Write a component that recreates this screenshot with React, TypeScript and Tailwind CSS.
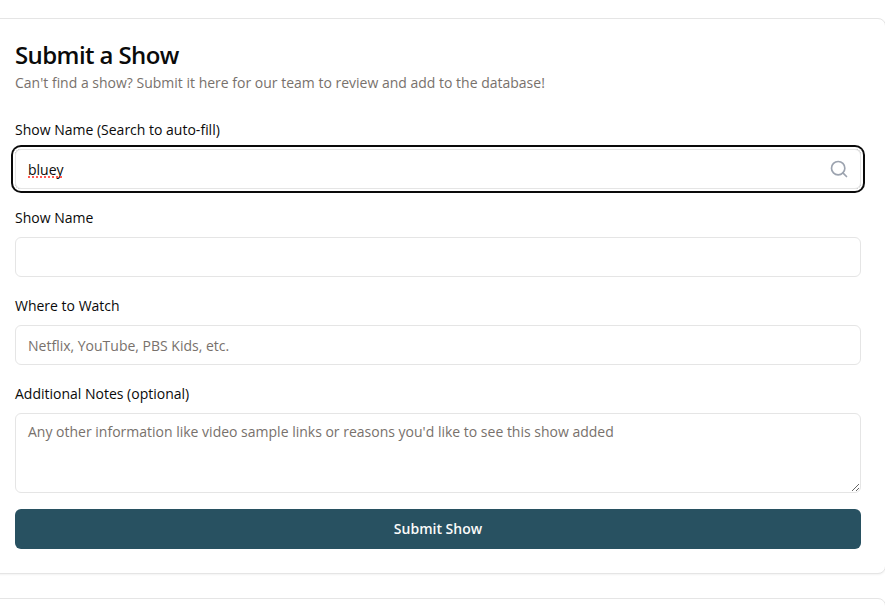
import { Search } from "lucide-react";

const field = "w-full rounded-md border border-[#e5e5e5] bg-white px-3 text-sm text-[#0a0a0a] placeholder:text-[#78716c]";

function Label({ children }: { children: string }) {
  return <label className="flex h-[14px] items-center text-sm leading-[14px] font-normal">{children}</label>;
}

export default function App() {
  return (
    <div className="h-[608px] w-[885px] overflow-hidden bg-white pt-[18px] font-['Open_Sans',sans-serif] text-[#0a0a0a] antialiased">
      <div className="-ml-[10px] h-[556px] w-[896px] rounded-lg border border-[#e5e5e5] bg-white pt-6 pr-6 pl-6 shadow-[0_1px_2px_0_rgba(0,0,0,0.05)]">
        <h2 className="h-6 text-2xl leading-6 font-semibold tracking-tight">Submit a Show</h2>
        <p className="mt-1.5 text-sm leading-5 text-[#78716c]">
          Can't find a show? Submit it here for our team to review and add to the database!
        </p>
        <form className="mt-[30px] flex flex-col">
          <Label>Show Name (Search to auto-fill)</Label>
          <div className="relative mt-3 h-10 rounded-md ring-2 ring-[#0a0a0a] ring-offset-2">
            <div className={`${field} flex h-10 items-center`}>
              <span className="relative pt-0.5">
                bluey
                <svg className="absolute top-[18px] left-0 h-0.5 w-[35px]" viewBox="0 0 35 2" aria-hidden="true">
                  <path d="M0 1H35" stroke="#ff5a52" strokeWidth="2" strokeDasharray="2 2" />
                </svg>
              </span>
            </div>
            <Search className="absolute top-[10px] right-3 size-5 text-[#9ca3af]" />
          </div>
          <div className="mt-[22px]"><Label>Show Name</Label></div>
          <input className={`${field} mt-3 h-10`} />
          <div className="mt-[22px]"><Label>Where to Watch</Label></div>
          <input className={`${field} mt-3 h-10`} placeholder="Netflix, YouTube, PBS Kids, etc." />
          <div className="mt-[22px]"><Label>Additional Notes (optional)</Label></div>
          <textarea className={`${field} mt-3 block h-20 py-2`} placeholder="Any other information like video sample links or reasons you'd like to see this show added" />
          <button type="button" className="mt-4 h-10 rounded-md bg-[#285161] text-sm font-semibold text-[#fafaf9]">Submit Show</button>
        </form>
      </div>
      <div className="mt-6 -ml-[10px] h-20 w-[896px] rounded-lg border border-[#e5e5e5] bg-white" />
    </div>
  );
}
